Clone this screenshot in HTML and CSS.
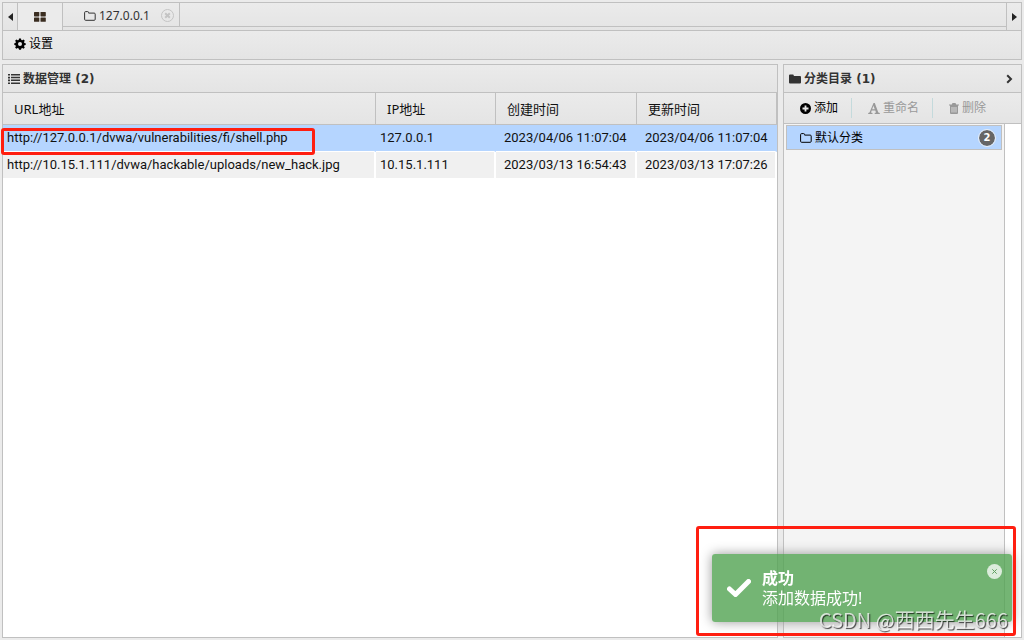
FILE: index.html
```
<!DOCTYPE html>
<html lang="zh-CN">
<head>
<meta charset="utf-8">
<title>数据管理</title>
<link rel="stylesheet" href="styles.css">
</head>
<body>
<div class="app">
  <nav class="tabs">
    <button class="arrow arrow-left" aria-label="向左"><svg width="5" height="8" viewBox="0 0 5 8"><path d="M5 0v8L0 4z"/></svg></button>
    <div class="tab-list">
      <button class="tab tab-home" aria-label="主页"><svg width="12" height="10" viewBox="0 0 12 10"><rect width="5.3" height="4.4" rx=".6"/><rect x="6.5" width="5.3" height="4.4" rx=".6"/><rect y="5.4" width="5.3" height="4.4" rx=".6"/><rect x="6.5" y="5.4" width="5.3" height="4.4" rx=".6"/></svg></button>
      <div class="tab tab-item">
        <svg class="line" width="12" height="10" viewBox="0 0 12 10"><path d="M.6 1.6Q.6.6 1.6.6h2q1 0 1 1v.5h5.6q1 0 1 1v5.2q0 1-1 1H1.6q-1 0-1-1z"/></svg>
        <span>127.0.0.1</span>
        <button class="tab-close" aria-label="关闭"><svg width="13" height="13" viewBox="0 0 13 13"><circle cx="6.5" cy="6.5" r="6"/><path d="M4.2 4.2l4.6 4.6M8.8 4.2L4.2 8.8"/></svg></button>
      </div>
    </div>
    <button class="arrow arrow-right" aria-label="向右"><svg width="5" height="8" viewBox="0 0 5 8"><path d="M0 0v8l5-4z"/></svg></button>
  </nav>
  <div class="toolbar">
    <button class="tool"><svg width="12" height="12" viewBox="0 0 12 12"><path fill-rule="evenodd" d="M5 .5h2l.3 1.4 1 .4 1.2-.8 1.3 1.3-.8 1.2.4 1 1.3.3v1.6l-1.3.3-.4 1 .8 1.3-1.3 1.3-1.2-.8-1 .4-.3 1.3H5l-.3-1.3-1-.4-1.3.8-1.3-1.3.8-1.3-.4-1L.3 7V5.300l1.200-.3.4-1-.8-1.200L2.400 1.500l1.300.8 1-.4zM6 4.100a2 2 0 1 0 0 4 2 2 0 0 0 0-4z"/></svg>设置</button>
  </div>
  <main class="content">
    <section class="panel">
      <h2 class="panel-head"><svg width="12" height="10" viewBox="0 0 12 10"><path d="M0 0h2v1.600H0zM3 0h9v1.500H3zM0 2.800h2v1.600H0zM3 2.800h9v1.500H3zM0 5.600h2v1.600H0zM3 5.600h9v1.500H3zM0 8.400h2V10H0zM3 8.400h9v1.500H3z"/></svg>数据管理 (2)</h2>
      <table class="grid">
        <colgroup><col><col class="col-ip"><col class="col-created"><col class="col-updated"></colgroup>
        <thead><tr><th>URL地址</th><th>IP地址</th><th>创建时间</th><th>更新时间</th></tr></thead>
        <tbody>
          <tr class="selected"><td><div class="marked">http://127.0.0.1/dvwa/vulnerabilities/fi/shell.php</div></td><td>127.0.0.1</td><td class="date">2023/04/06 11:07:04</td><td class="date">2023/04/06 11:07:04</td></tr>
          <tr><td>http://10.15.1.111/dvwa/hackable/uploads/new_hack.jpg</td><td>10.15.1.111</td><td class="date">2023/03/13 16:54:43</td><td class="date">2023/03/13 17:07:26</td></tr>
        </tbody>
      </table>
    </section>
    <aside class="panel sidebar">
      <h2 class="panel-head"><svg width="12" height="10" viewBox="0 0 12 10"><path d="M0 1.500Q0 .5 1 .5h2.800q1 0 1 1V2H11q1 0 1 1v5.500q0 1-1 1H1q-1 0-1-1z"/></svg>分类目录 (1)
        <button class="collapse" aria-label="收起"><svg class="chevron" width="7" height="10" viewBox="0 0 7 10"><path d="M1.200 1.200L5 5 1.200 8.800"/></svg></button></h2>
      <div class="side-tools">
        <button class="tool"><svg width="11" height="11" viewBox="0 0 11 11"><path fill-rule="evenodd" d="M5.500 0a5.500 5.500 0 1 0 0 11 5.500 5.500 0 0 0 0-11zM4.600 2.500h1.800v2.100h2.100v1.800H6.400v2.100H4.600V6.400H2.500V4.600h2.100z"/></svg>添加</button>
        <button class="tool" disabled><svg width="12" height="11" viewBox="0 0 12 11"><path fill-rule="evenodd" d="M5.500 0h1.300l3.500 9.400 1.500.5V11H6.700V9.900L8 9.600l-.7-2H3.700L3 9.500l1.500.4V11H.2V9.900l1.300-.5zM5.400 2.800L4.200 6.300h2.600z"/></svg>重命名</button>
        <button class="tool" disabled><svg width="10" height="11" viewBox="0 0 10 11"><path fill-rule="evenodd" d="M3.500 0h3l.7 1.500H10v1H9V10q0 1-1 1H2q-1 0-1-1V2.500H0v-1h2.800zM2.600 4v5.500h.8V4zm2 0v5.500h.8V4zm2 0v5.500h.8V4z"/></svg>删除</button>
      </div>
      <div class="tree">
        <button class="node"><svg class="line" width="12" height="10" viewBox="0 0 12 10"><path d="M.6 1.600Q.6.6 1.600.6h2q1 0 1 1v.5h5.600q1 0 1 1v5.200q0 1-1 1H1.600q-1 0-1-1z"/></svg><span>默认分类</span><span class="count">2</span></button>
      </div>
    </aside>
  </main>
</div>
<div class="toast" role="status">
  <svg class="check" width="24" height="18" viewBox="0 0 24 18"><path d="M2.500 10l6 5.500L21.500 2.500"/></svg>
  <div class="toast-text"><strong>成功</strong><span>添加数据成功!</span></div>
  <button class="toast-close" aria-label="关闭"><svg width="15" height="15" viewBox="0 0 15 15"><circle cx="7.500" cy="7.500" r="7.500"/><path d="M5.300 5.300l4.400 4.400M9.700 5.300L5.300 9.700"/></svg></button>
</div>
<div class="frame"></div>
<div class="watermark">CSDN @西西先生666</div>
</body>
</html>
```
FILE: styles.css
```
*, *::after { box-sizing: border-box; }
body {
  margin: 0;
  background: #ebebeb;
  color: #333;
  font: 12px/16px "Noto Sans", "Noto Sans CJK SC", sans-serif;
}
button {
  margin: 0;
  padding: 0;
  border: 0;
  background: none;
  color: inherit;
  font: inherit;
}
svg { flex: none; fill: currentColor; }
.line, .chevron { fill: none; stroke: currentColor; }
.chevron { stroke-width: 2; }
.app {
  display: flex;
  flex-direction: column;
  height: 100vh;
  padding: 2px;
}
.tabs, .toolbar, .panel-head, .side-tools, .grid th {
  background: linear-gradient(#ebebeb, #e4e4e4);
}
.tabs {
  display: flex;
  height: 28px;
  border: 1px solid #c0c0c0;
  border-bottom: 0;
}
.arrow {
  display: flex;
  align-items: center;
  justify-content: center;
  width: 15px;
  color: #222;
}
.arrow-left { border-right: 1px solid #c0c0c0; }
.arrow-right { border-left: 1px solid #c0c0c0; }
.tab-list {
  display: flex;
  flex: 1;
  height: 24px;
  border-bottom: 1px solid #c0c0c0;
}
.tab {
  display: flex;
  align-items: center;
  border-right: 1px solid #c0c0c0;
}
.tab-home {
  justify-content: center;
  width: 45px;
  height: 27px;
  background: #ebebeb;
  color: #3a2d20;
}
.tab-item { gap: 3px; padding: 2px 5px 0 21px; }
.tab-close { display: flex; margin-left: 8px; }
.tab-close svg { fill: none; stroke: #c4c4c4; }
.tab-close path { stroke-width: 2; }
.toolbar {
  display: flex;
  height: 30px;
  padding: 0 11px 2px;
  border: 1px solid #c0c0c0;
}
.tool {
  display: flex;
  align-items: center;
  gap: 3px;
  color: #000;
}
.content {
  display: flex;
  flex: 1;
  gap: 5px;
  min-height: 0;
  margin-top: 4px;
}
.panel {
  display: flex;
  flex: 1;
  flex-direction: column;
  min-width: 0;
  border: 1px solid #c0c0c0;
  background: #fff;
}
.sidebar { flex: 0 0 239px; }
.panel-head {
  display: flex;
  flex: none;
  align-items: center;
  gap: 3px;
  height: 28px;
  margin: 0;
  padding: 0 5px;
  border-bottom: 1px solid #c0c0c0;
  font: bold 12px/16px "DejaVu Sans", "Noto Sans CJK SC", sans-serif;
}
.collapse { display: flex; margin-left: auto; padding-right: 3px; }
.grid {
  width: 100%;
  border-collapse: separate;
  border-spacing: 0;
  table-layout: fixed;
  color: #111;
  font-size: 13px;
}
.col-ip { width: 120px; }
.col-created { width: 141px; }
.col-updated { width: 140px; }
.grid th {
  height: 32px;
  padding: 0 11px;
  border-right: 1px solid #c0c0c0;
  border-bottom: 1px solid #c0c0c0;
  color: #111;
  font-weight: normal;
  text-align: left;
}
.grid td {
  height: 27px;
  padding: 0 4px;
  border-right: 2px solid #fff;
  border-bottom: 1px solid #fff;
  background: #f0f0f0;
  font-family: Roboto, "Noto Sans", sans-serif;
  white-space: nowrap;
}
.grid .date { padding-left: 8px; }
.grid .selected td { border-right-color: #b5d5ff; background: #b5d5ff; }
.marked { position: relative; }
.marked::after {
  position: absolute;
  top: -2px;
  left: -6px;
  width: 314px;
  height: 27px;
  border: 3px solid #ff1e10;
  border-radius: 3px;
  content: "";
}
.side-tools {
  display: flex;
  flex: none;
  align-items: center;
  height: 31px;
  border-bottom: 1px solid #c0c0c0;
}
.side-tools .tool { height: 20px; padding: 0 13px 0 16px; }
.side-tools .tool + .tool { border-left: 1px solid #c4dadc; }
.side-tools .tool:disabled { color: #999; }
.tree {
  flex: 1;
  margin-right: 16px;
  padding: 1px 2px;
  border-right: 1px solid #c0c0c0;
  background: #f4f4f4;
}
.node {
  display: flex;
  align-items: center;
  gap: 3px;
  width: 100%;
  height: 25px;
  padding: 0 6px 0 13px;
  border: 1px solid #c0c0c0;
  background: #b5d5ff;
  color: #000;
}
.count {
  width: 16px;
  margin-left: auto;
  border-radius: 8px;
  outline: 1px solid #e8eef5;
  background: #666;
  color: #fff;
  font: bold 10px/16px "DejaVu Sans", sans-serif;
}
.toast {
  position: fixed;
  right: 12px;
  bottom: 18px;
  display: flex;
  align-items: center;
  gap: 11px;
  width: 300px;
  height: 68px;
  padding: 0 10px 0 15px;
  border-radius: 3px;
  background: rgba(81, 163, 81, .8);
  box-shadow: 0 0 12px #999;
  color: #fff;
}
.check { fill: none; stroke: #fff; stroke-width: 5; stroke-linecap: round; stroke-linejoin: round; }
.toast-text {
  display: flex;
  flex: 1;
  flex-direction: column;
  font-size: 16px;
  line-height: 20px;
}
.toast-close { display: flex; align-self: flex-start; margin-top: 10px; }
.toast-close svg { fill: #dcecdc; stroke: #60a060; }
.toast-close circle { stroke: none; }
.frame {
  position: fixed;
  right: 8px;
  bottom: 4px;
  width: 320px;
  height: 110px;
  border: 3px solid #ff1e10;
  border-radius: 3px;
}
.watermark {
  position: fixed;
  right: 16px;
  bottom: 8px;
  color: rgba(255, 255, 255, .75);
  font: 20px/24px "Noto Sans CJK SC", sans-serif;
  text-shadow: 1px 1px 1px rgba(0, 0, 0, .7);
}
```
